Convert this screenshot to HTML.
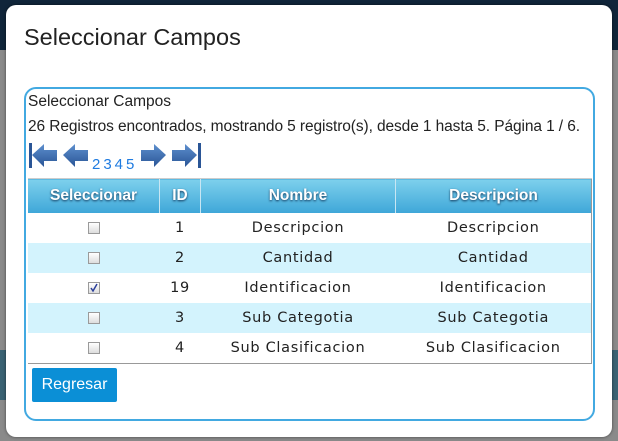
<!DOCTYPE html>
<html><head><meta charset="utf-8"><style>
body{margin:0;width:618px;height:441px;overflow:hidden;position:relative;background:#8a8a8a;font-family:"Liberation Sans",sans-serif}
.top{position:absolute;left:0;top:0;width:618px;height:50px;background:#10253a}
.side{position:absolute;left:0;top:350px;width:618px;height:50px;background:#3a6273}
.modal{position:absolute;left:6px;top:5px;width:606px;height:432px;background:#fff;border-radius:10px;box-shadow:0 0 3px rgba(0,0,0,.5)}
h1{position:absolute;left:24px;top:24px;margin:0;font-weight:normal;font-size:23.5px;color:#222}
.panel{position:absolute;left:24px;top:87px;width:567px;height:330px;border:2.5px solid #42a9e1;border-radius:12px}
.t1{position:absolute;left:28px;top:93px;font-size:15.5px;color:#222}
.t2{position:absolute;left:28px;top:118px;font-size:15.5px;color:#222;white-space:nowrap;letter-spacing:-.1px}
.nav{position:absolute;left:28px;top:142px;height:28px}
.pg{position:absolute;left:92px;top:156px;font-size:15px;color:#1f7be0;letter-spacing:3px}
table{position:absolute;left:28px;top:178px;width:564px;border-collapse:collapse;font-family:"DejaVu Sans",sans-serif;font-size:14.5px}
th{height:34px;padding:0;background:linear-gradient(#7dd0ec,#3ea6d8);color:#fff;font-family:"Liberation Sans",sans-serif;font-weight:bold;font-size:15.5px;text-shadow:0 1px 2px #135;border-left:1px solid #c8e6f3;border-top:1px solid #ccc}
th:first-child{border-left:none}
td{height:30px;padding:0;text-align:center;color:#222;letter-spacing:.7px}
tr.a td{background:#d3f3fd}
tbody{border-bottom:1px solid #999}
table{border-right:1px solid #999}
.cb{display:inline-block;width:10px;height:10px;border:1px solid #9a9a9a;background:linear-gradient(#fff,#ddd);vertical-align:middle;position:relative}
.btn{position:absolute;left:32px;top:368px;width:85px;height:34px;background:#0b8fd6;border-radius:2px;color:#fff;font-size:16px;line-height:34px;text-align:center}
</style></head><body>
<div class="top"></div><div class="side"></div>
<div class="modal"></div>
<h1>Seleccionar Campos</h1>
<div class="panel"></div>
<div class="t1">Seleccionar Campos</div>
<div class="t2">26 Registros encontrados, mostrando 5 registro(s), desde 1 hasta 5. Página 1 / 6.</div>
<svg class="nav" width="180" height="28" viewBox="0 0 180 28">
<defs><linearGradient id="g" x1="0" y1="0" x2="0" y2="1"><stop offset="0" stop-color="#5d8fce"/><stop offset="1" stop-color="#2a5596"/></linearGradient></defs>
<rect x="1" y="1" width="3" height="25" fill="#2a5596"/>
<path d="M4 13 L16 2 L16 8 L29 8 L29 19 L16 19 L16 25 Z" fill="url(#g)"/>
<path d="M35 13 L47 2 L47 8 L60 8 L60 19 L47 19 L47 25 Z" fill="url(#g)"/>
<path d="M138 13 L126 2 L126 8 L113 8 L113 19 L126 19 L126 25 Z" fill="url(#g)"/>
<path d="M169 13 L157 2 L157 8 L144 8 L144 19 L157 19 L157 25 Z" fill="url(#g)"/>
<rect x="170" y="1" width="3" height="25" fill="#2a5596"/>
</svg>
<div class="pg">2345</div>
<table>
<thead><tr><th style="width:131px">Seleccionar</th><th style="width:40px">ID</th><th style="width:194px">Nombre</th><th>Descripcion</th></tr></thead>
<tbody>
<tr><td><span class="cb"></span></td><td>1</td><td>Descripcion</td><td>Descripcion</td></tr>
<tr class="a"><td><span class="cb"></span></td><td>2</td><td>Cantidad</td><td>Cantidad</td></tr>
<tr><td><span class="cb"><svg width="10" height="10" style="position:absolute;left:0;top:0"><path d="M2 5 L4 8 L8 1" stroke="#2b3f9a" stroke-width="1.5" fill="none"/></svg></span></td><td>19</td><td>Identificacion</td><td>Identificacion</td></tr>
<tr class="a"><td><span class="cb"></span></td><td>3</td><td>Sub Categotia</td><td>Sub Categotia</td></tr>
<tr><td><span class="cb"></span></td><td>4</td><td>Sub Clasificacion</td><td>Sub Clasificacion</td></tr>
</tbody></table>
<div class="btn">Regresar</div>
</body></html>
